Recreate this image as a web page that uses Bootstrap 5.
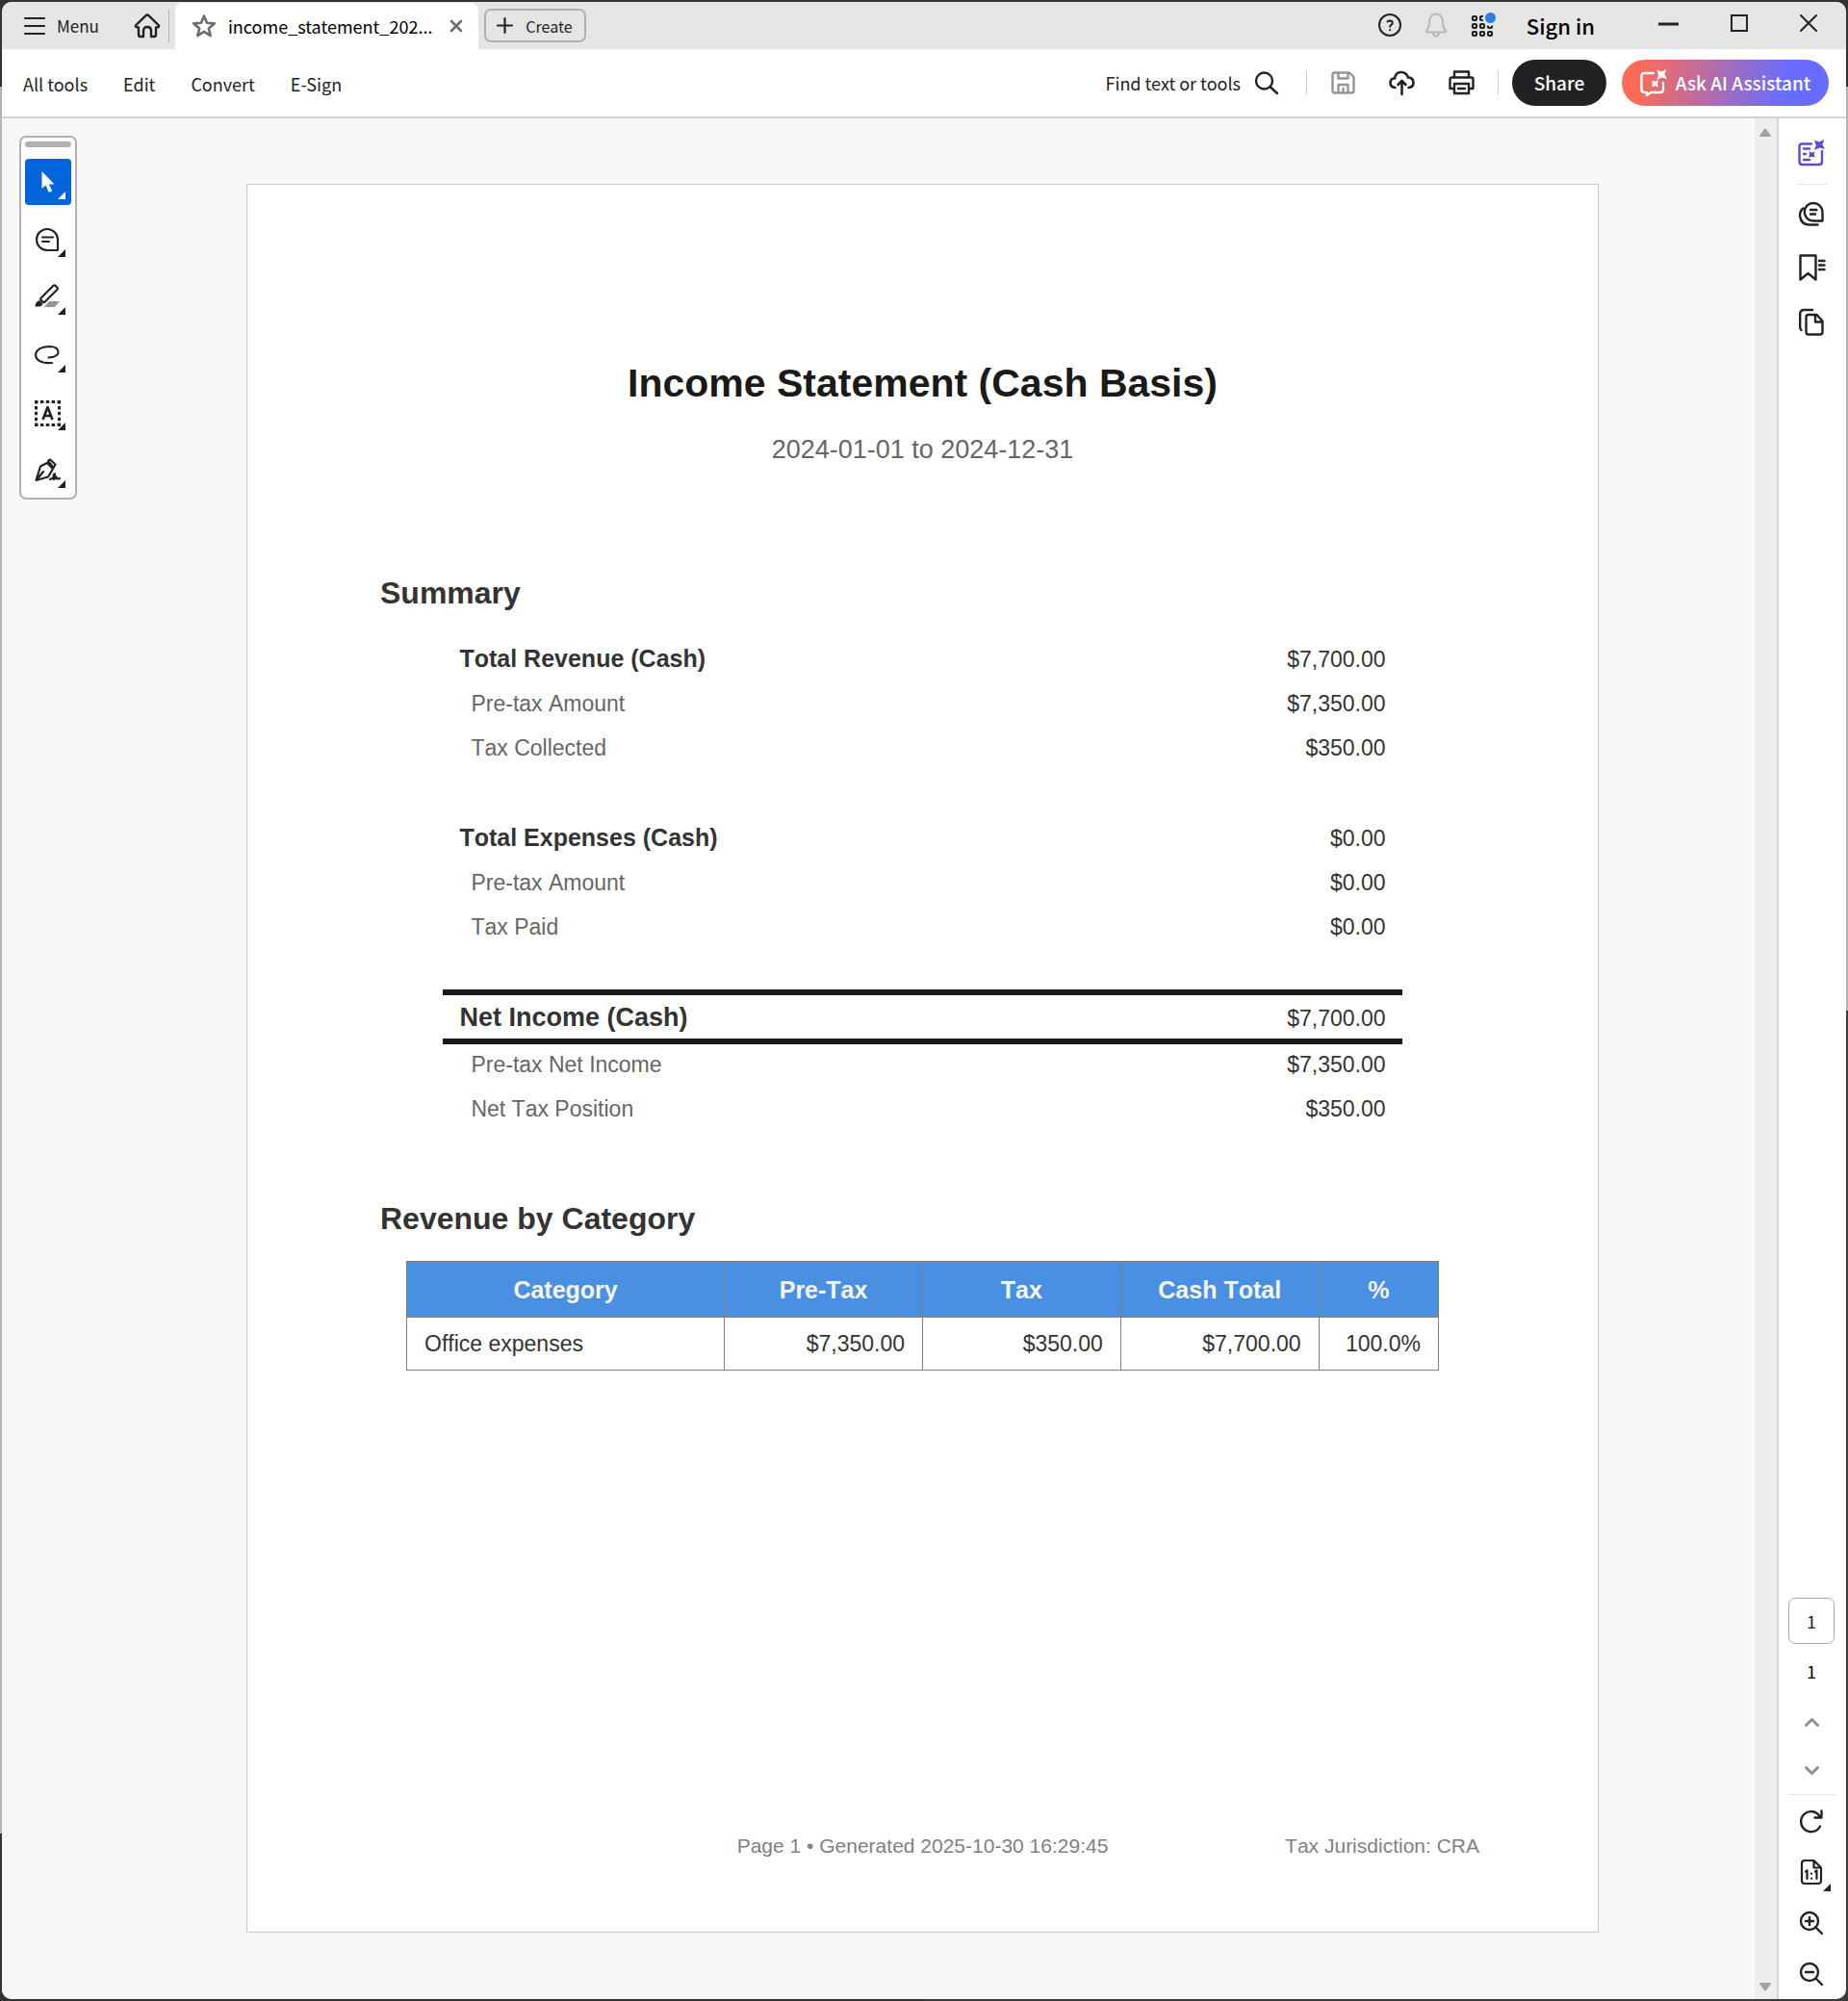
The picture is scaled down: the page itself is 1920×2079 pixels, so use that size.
<!DOCTYPE html>
<html lang="en">
<head>
<meta charset="utf-8">
<meta name="viewport" content="width=device-width, initial-scale=1">
<title>income_statement_2024.pdf</title>
<link rel="stylesheet" href="https://cdn.jsdelivr.net/npm/bootstrap@5.3.0/dist/css/bootstrap.min.css">
<style>
:root { --ink: #222; --line: #d3d3d3; --ui: "Noto Sans CJK SC", "Noto Sans", sans-serif; }
body { font-family: var(--ui); color: var(--ink); padding: 2px; min-height: 100vh;
  background:
    linear-gradient(#333 0 90px, #b4b4b4 90px 1905px, #333 1905px) left / 50% 100% no-repeat,
    linear-gradient(#333 0 90px, #b4b4b4 90px 1050px, #3a3a3a 1050px) right / 50% 100% no-repeat; }
.frame-edge { min-height: calc(100vh - 4px); background: #fff; border-radius: 10px; overflow: hidden; }
svg { display: block; flex: none; fill: none; stroke: currentColor; stroke-linecap: round; stroke-linejoin: round; overflow: visible; }
svg:not([stroke-width]) { stroke-width: 2; }
svg .solid { fill: currentColor; stroke: none; }
button { font-family: var(--ui); }
.plain { background: none; border: 0; padding: 0; color: inherit; display: flex; align-items: center; justify-content: center; }

/* title bar */
.titlebar { background: #e5e5e5; height: 49px; padding-right: 30px; line-height: 24px; font-size: 17px; }
.menu-btn { padding-left: 23px; gap: 12px; }
.home-btn { margin-left: 36px; width: 28px; }
.bar-rule { width: 1px; height: 34px; background: #b5b5b5; margin: 0 6px 0 8px; }
.doc-tab { background: #fff; border-radius: 8px 8px 0 0; margin-top: 1px; width: 315px; padding: 0 17px; color: #000; font-size: 18px; }
.doc-tab .star, .doc-tab .shut { color: #6e6e6e; }
.create-btn { border: 2px solid #b1b1b1; border-radius: 7px; width: 106px; height: 35px; margin-left: 6px; gap: 14px; font-size: 16px; }
.bell { color: #b8b8b8; }
.title-tools { padding-bottom: 2px; }
.signin { color: #000; font-size: 22px; font-weight: 500; }
.win-btns { gap: 54px; margin-left: 66px; padding-bottom: 3px; }

/* tool bar */
.toolbar { height: 72px; border-bottom: 2px solid var(--line); padding: 0 18px 0 22px; font-size: 18px; line-height: 28px; }
.toolbar a { color: var(--ink); text-decoration: none; }
.toolbar .tool-links { gap: 37px; padding-top: 2px; }
.find-btn { gap: 15px; margin-right: 29px; }
.file-btns { gap: 35px; margin-left: 25px; }
.vr-thin { width: 1px; height: 24px; background: #cfcfcf; }
.pill { border: 0; border-radius: 24px; height: 48px; color: #fff; font-weight: 500; font-size: 19px; }
.pill-share { background: #222; width: 98px; margin: 0 16px 0 14px; }
.pill-ai { width: 215px; gap: 9px; background: linear-gradient(100deg, #ff6b55 8%, #686dff 78%); }

/* quick tools */
.quick-col { width: 94px; padding: 18px 0 0 18px; }
.quick { width: 60px; border: 2px solid #b1b1b1; border-radius: 7px; background: #fff; padding: 4px 4px 0; }
.grip { height: 6px; border-radius: 3px; background: #b1b1b1; margin-bottom: 12px; }
.quick-btn { width: 48px; height: 48px; margin-bottom: 12px; padding-right: 2px; border-radius: 4px; position: relative; }
.quick-btn:last-child { margin-bottom: 4px; }
.quick-btn.picked { background: #0265dc; color: #fff; padding-right: 0; }
.fly::after { content: ""; position: absolute; right: 6px; bottom: 6px; border: 4px solid; border-color: transparent currentColor currentColor transparent; }

/* document area */
.desk { background: #f7f7f7; }
.sheet { width: 1405px; max-width: 100%; min-height: 1817px; margin: 68px auto 69px; padding: 181px 0 74px; background: #fff; border: 1px solid #c9c9c9; font-family: "Liberation Sans", Arial, sans-serif; font-kerning: none; color: #333; }
.sheet h1 { font-size: 41px; line-height: 50px; font-weight: 700; color: #1a1a1a; margin: 0 0 28px; }
.period { font-size: 27px; line-height: 32px; color: #666; margin: 0 0 113px; }
.sheet h2 { font-size: 32px; line-height: 40px; font-weight: 700; color: #333; margin: 0 138px 24px; }
.sums { width: 71%; margin: 0 auto 72px; font-size: 23px; line-height: 30px; border-collapse: collapse; }
.sums th, .sums td { height: 46px; padding: 9px 17px 0; vertical-align: baseline; }
.sums td { text-align: right; }
.sums .gap-row td { height: 47px; }
.sums th { font-weight: 400; color: #666; padding-left: 29px; }
.sums .total > * { height: 47px; }
.sums .total th { font-weight: 700; font-size: 25px; color: #333; padding-left: 17px; }
.sums .net > * { height: 51px; padding-top: 8px; border-top: 6px solid #1a1a1a; border-bottom: 6px solid #1a1a1a; }
.sums .net th { font-size: 27px; }
.sums .net + tr > * { padding-top: 6px; }
.cats { width: 1073px; max-width: 90%; margin: 0 auto; table-layout: fixed; border-collapse: collapse; font-size: 23px; line-height: 30px; }
.cats th, .cats td { border: 1px solid #808080; padding: 0 18px; height: 55px; text-align: right; }
.cats thead th { background: #4a90e2; color: #f5f5f5; font-size: 25px; height: 58px; text-align: center; }
.cats tbody th { font-weight: 400; text-align: left; }
.sheet-foot { display: grid; grid-template-columns: 1fr auto 1fr; padding: 0 123px; font-size: 21px; line-height: 30px; color: #808080; }

/* right side */
.track { width: 27px; background: #eee; border-left: 1px solid #fff; border-right: 2px solid var(--line); padding: 10px 0 8px; color: #a3a3a3; }
.rail { width: 70px; padding: 22px 2px 0 0; font-size: 18px; line-height: 24px; }
.rail .thin { height: 1px; background: #e1e1e1; }
.thin-short { width: 31px; margin: 18px 0 17px; }
.thin-long { width: 49px; }
.panel-btns { gap: 29px; }
.page-box { width: 48px; height: 48px; border: 1px solid #a6a6a6; border-radius: 7px; text-align: center; font-size: 18px; color: var(--ink); padding: 0; background: #fff; }
.step-btn { width: 48px; height: 50px; }
.rail-btn { width: 48px; height: 53px; position: relative; }
.rail-btn.fly::after { right: 4px; }
</style>
<script src="https://cdn.jsdelivr.net/npm/bootstrap@5.3.0/dist/js/bootstrap.bundle.min.js"></script>
</head>
<body>
<div class="frame-edge d-flex flex-column">
  <header class="titlebar d-flex align-items-center">
    <button class="plain menu-btn"><svg width="22" height="20" viewBox="0 0 22 20" stroke-width="2.200"><path d="M1 2h20M1 10h20M1 18h20"/></svg>Menu</button>
    <button class="plain home-btn" aria-label="Home"><svg width="28" height="26" viewBox="0 0 28 26" stroke-width="2.400"><path d="M12.600 2.200 2.400 12q-1.500 2 1 2.400h1.600V22q0 2 2 2h3v-6q0-4 4-4t4 4v6h3q2 0 2-2v-7.600h1.600q2.500-.4 1-2.400L15.400 2.200q-1.400-1.200-2.800 0z"/></svg></button>
    <span class="bar-rule"></span>
    <div class="doc-tab d-flex align-items-center align-self-stretch">
      <button class="plain star" aria-label="Star file"><svg width="26" height="26" viewBox="0 0 26 26" stroke-width="2.600"><path d="m13 2.500 3 7.300 7.800.6-6 5 1.900 7.700-6.700-4.200-6.700 4.200 1.900-7.700-6-5 7.800-.6z"/></svg></button>
      <span class="ms-2 ps-1 me-auto text-nowrap">income_statement_202...</span>
      <button class="plain shut" aria-label="Close tab"><svg width="12" height="12" viewBox="0 0 12 12" stroke-width="2.600"><path d="m1 1 10 10M11 1 1 11"/></svg></button>
    </div>
    <button class="plain create-btn"><svg width="15" height="15" viewBox="0 0 15 15" stroke-width="2.200"><path d="M7.500 0v15M0 7.500h15"/></svg>Create</button>
    <div class="title-tools d-flex align-items-center ms-auto">
      <button class="plain" aria-label="Help"><svg width="24" height="24" viewBox="0 0 24 24"><circle cx="12" cy="12" r="11"/><path d="M9.500 8.600Q10.500 7.500 12 7.500q2.700.1 2.700 2.200 0 1.300-1.300 2.100-1.300.9-1.300 2M12.100 17v.2"/></svg></button>
      <button class="plain bell ms-4" aria-label="Notifications"><svg width="24" height="26" viewBox="0 0 24 26"><path d="M12 1.500q-6.500.5-7 8Q5 16 2 19q-.6 1.500 1 1.500h18q1.600 0 1-1.500-3-3-3-9.500-.5-7.500-7-8zM9 21.500q.5 3 3 3t3-3"/></svg></button>
      <button class="plain ms-4" aria-label="Apps"><svg width="26" height="26" viewBox="0 0 26 26"><g stroke-width="2.200"><rect x="2" y="4" width="4" height="4" rx="1"/><rect x="10" y="4" width="4" height="4" rx="1"/><rect x="2" y="12" width="4" height="4" rx="1"/><rect x="10" y="12" width="4" height="4" rx="1"/><rect x="18" y="12" width="4" height="4" rx="1"/><rect x="2" y="20" width="4" height="4" rx="1"/><rect x="10" y="20" width="4" height="4" rx="1"/><rect x="18" y="20" width="4" height="4" rx="1"/></g><circle cx="20" cy="6.500" r="7.500" fill="#e5e5e5" stroke="none"/><circle cx="20.500" cy="5.500" r="5.500" fill="#2680eb" stroke="none"/></svg></button>
      <button class="plain signin ms-4 ps-2">Sign in</button>
      <div class="win-btns d-flex align-items-center">
        <button class="plain" aria-label="Minimize"><svg width="21" height="18" viewBox="0 0 21 18"><path d="M0 10h21" stroke-width="3" stroke-linecap="butt"/></svg></button>
        <button class="plain" aria-label="Maximize"><svg width="18" height="18" viewBox="0 0 18 18"><path d="M1 1h16v16H1z" stroke-linejoin="miter"/></svg></button>
        <button class="plain" aria-label="Close"><svg width="18" height="18" viewBox="0 0 18 18"><path d="m1 1 16 16M17 1 1 17"/></svg></button>
      </div>
    </div>
  </header>

  <nav class="toolbar d-flex align-items-center">
    <div class="tool-links d-flex">
      <a href="#">All tools</a><a href="#">Edit</a><a href="#">Convert</a><a href="#">E-Sign</a>
    </div>
    <button class="plain find-btn ms-auto">Find text or tools<svg width="24" height="24" viewBox="0 0 24 24" stroke-width="2.400"><circle cx="9.500" cy="10" r="8.500"/><path d="m16 16.500 7 6.500"/></svg></button>
    <span class="vr-thin"></span>
    <div class="file-btns d-flex align-items-center">
      <button class="plain" aria-label="Save"><svg width="25" height="24" viewBox="0 0 25 24" color="#959595" stroke-width="2.400"><path d="M3 1.500h16l4.500 4.500v14.500q0 2-2 2h-18q-2 0-2-2v-17q0-2 2-2zM7.500 2v5.500h10V2M7.500 22v-8h10v8M12.500 18v4"/></svg></button>
      <button class="plain" aria-label="Upload"><svg width="27" height="26" viewBox="0 0 27 26" stroke-width="2.600"><path d="M6.500 18Q1.500 17.500 1.500 13T6 8.500Q7 2 12.500 2t7.500 5.500q5.500.2 5.500 5.500 0 4.500-5 5M13.500 25V11.500M9.500 15l4-4 4 4"/></svg></button>
      <button class="plain" aria-label="Print"><svg width="27" height="26" viewBox="0 0 27 26" stroke-width="2.400"><path d="M6 7.500V1.500h15v6M6 19H1.500V9.500q0-2 2-2h20q2 0 2 2V19H21M6 14h15v10H6zM10 19h7"/></svg></button>
    </div>
    <span class="vr-thin ms-4"></span>
    <button class="pill pill-share">Share</button>
    <button class="pill pill-ai plain"><svg width="28" height="28" viewBox="0 0 28 28" stroke-width="2.400"><path d="M14 4H4.500Q1.500 4 1.500 7v14q0 3 3 3H7v3l4.500-3H21q3 0 3-3v-7"/><path class="solid" d="M17.500.5l4.500 2L27.500 0l-2.200 5 2.700 5-5.500-1.500-5 2.500 1.500-5zM12.500 11.500l3 1 3.500-1-1 3 1 3.500-3.500-.7-3.500 1 .8-3.300z"/></svg>Ask AI Assistant</button>
  </nav>

  <div class="d-flex flex-grow-1">
    <div class="desk flex-grow-1 d-flex">
      <aside class="quick-col flex-shrink-0">
        <div class="quick">
          <div class="grip"></div>
          <button class="plain quick-btn picked fly" aria-label="Select"><svg width="14" height="22" viewBox="0 0 14 22"><path class="solid" d="M.5 0v18l4-3.500 3 7q2.500.5 3.500-1.500l-3-6.500h5.500z"/></svg></button>
          <button class="plain quick-btn fly" aria-label="Comment"><svg width="24" height="24" viewBox="0 0 24 24" stroke-width="2.200"><path d="M12 1a11 11 0 1 0 0 22h11V12A11 11 0 0 0 12 1zM7 9.500h11M7 14h7"/></svg></button>
          <button class="plain quick-btn fly" aria-label="Highlight"><svg width="26" height="28" viewBox="0 0 26 28" stroke-width="2.200"><path d="m19.500 1.800-13 13q-.8 1 0 1.800l2.200 2.200q.8.8 1.800 0l13-13q1-1 0-2l-2-2q-1-1-2 0z"/><path class="solid" d="m5 17 3.500 3.500q-1 3-4 3H.5Q.5 18.500 5 17z"/><path d="M15 18h11l-5 6H10z" fill="#959595" stroke="none"/></svg></button>
          <button class="plain quick-btn fly" aria-label="Draw"><svg width="26" height="20" viewBox="0 0 26 20" stroke-width="2.200"><path d="M14.500 12.500q9-.5 10-5Q25 1.500 16 1 1.500 1.500 1 10q1 9 17 8"/></svg></button>
          <button class="plain quick-btn fly" aria-label="Add text"><svg width="27" height="27" viewBox="0 0 27 27"><path d="M0 1.500h27M0 25.500h27M1.500 0v27M25.500 0v27" stroke-width="3" stroke-linecap="butt" stroke-dasharray="3.500 2.375"/><path d="m8.500 20 5-13 5 13M10.500 16h6" stroke-width="2.600" stroke-linecap="butt"/></svg></button>
          <button class="plain quick-btn fly" aria-label="Sign"><svg width="27" height="24" viewBox="0 0 27 24" stroke-width="2.200"><path d="m13 4-7 3.500L1.500 22 14 18.500 19 10zM2 21.500 9 13M14 2l2-1.500 5.500 5-2 3.500zM16 21q6-2 5-5.500-1.500-.5-1.500 4 0 3.500 3-1 0 3 3.500 1.500"/></svg></button>
        </div>
      </aside>
      <main class="flex-grow-1">
        <article class="sheet d-flex flex-column">
          <h1 class="text-center">Income Statement (Cash Basis)</h1>
          <p class="period text-center">2024-01-01 to 2024-12-31</p>
          <h2>Summary</h2>
          <table class="sums">
            <tbody>
              <tr class="total"><th scope="row">Total Revenue (Cash)</th><td>$7,700.00</td></tr>
              <tr><th scope="row">Pre-tax Amount</th><td>$7,350.00</td></tr>
              <tr><th scope="row">Tax Collected</th><td>$350.00</td></tr>
              <tr class="gap-row"><td colspan="2"></td></tr>
              <tr class="total"><th scope="row">Total Expenses (Cash)</th><td>$0.00</td></tr>
              <tr><th scope="row">Pre-tax Amount</th><td>$0.00</td></tr>
              <tr><th scope="row">Tax Paid</th><td>$0.00</td></tr>
              <tr><td colspan="2"></td></tr>
              <tr class="total net"><th scope="row">Net Income (Cash)</th><td>$7,700.00</td></tr>
              <tr><th scope="row">Pre-tax Net Income</th><td>$7,350.00</td></tr>
              <tr><th scope="row">Net Tax Position</th><td>$350.00</td></tr>
            </tbody>
          </table>
          <h2>Revenue by Category</h2>
          <table class="cats">
            <colgroup><col style="width:30.8%"><col style="width:19.2%"><col style="width:19.2%"><col style="width:19.2%"><col style="width:11.6%"></colgroup>
            <thead><tr><th scope="col">Category</th><th scope="col">Pre-Tax</th><th scope="col">Tax</th><th scope="col">Cash Total</th><th scope="col">%</th></tr></thead>
            <tbody><tr><th scope="row">Office expenses</th><td>$7,350.00</td><td>$350.00</td><td>$7,700.00</td><td>100.0%</td></tr></tbody>
          </table>
          <footer class="sheet-foot mt-auto"><span></span><span>Page 1 • Generated 2025-10-30 16:29:45</span><span class="text-end">Tax Jurisdiction: CRA</span></footer>
        </article>
      </main>
    </div>
    <div class="track d-flex flex-column justify-content-between align-items-center">
      <svg width="12" height="10" viewBox="0 0 12 10"><path class="solid" d="M5 1q1-1 2 0l5 7q0 1-1 1H1Q0 9 0 8z"/></svg>
      <svg width="12" height="10" viewBox="0 0 12 10"><path class="solid" d="M5 9q1 1 2 0l5-7q0-1-1-1H1Q0 1 0 2z"/></svg>
    </div>
    <aside class="rail d-flex flex-column align-items-center">
      <button class="plain" aria-label="AI summary"><svg width="28" height="28" viewBox="0 0 28 28" color="#5c4bd1" stroke-width="2.400"><path d="M14 4.500H4.500q-3 0-3 3V23q0 3 3 3H22q3 0 3-3V12M6 9.500h6M6 15h2M6 21h6"/><path class="solid" d="M17 .5l4.800 2L27.500 0l-2.200 5 2.700 5-5.500-1.500-5.500 2.500 1.800-5zM11.500 12.500l3 1 3-1-.8 2.800.8 3.200-3-.7-3.200 1 .7-3.300z"/></svg></button>
      <span class="thin thin-short"></span>
      <div class="panel-btns d-flex flex-column align-items-center">
        <button class="plain" aria-label="Comments"><svg width="26" height="26" viewBox="0 0 26 26" stroke-width="2.400"><path d="M15 2a9 9 0 0 0 0 18.500h9.500V11A9.300 9.300 0 0 0 15 2zM12 9h6.500M12 13.500h5M4.500 7.500Q1 10 1 15q1 9 9 9.500h9.500"/></svg></button>
        <button class="plain" aria-label="Bookmarks"><svg width="27" height="28" viewBox="0 0 27 28" stroke-width="2.400"><path d="M1.500 1.500h16v25l-8-6.500-8 6.500zM21 7h5.500M21 11.500h5.500M21 16h5.500"/></svg></button>
        <button class="plain" aria-label="Pages"><svg width="26" height="28" viewBox="0 0 26 28" stroke-width="2.400"><path d="M17 6h-7q-2.500 0-2.500 2.500V24q0 2.500 2.500 2.500h12q2.500 0 2.500-2.500V12.500L18.500 6H17M17 6v7.500h7M2.500 22Q1.200 21 1.200 19V5q0-4 4-4H14"/></svg></button>
      </div>

      <input class="page-box mt-auto" type="text" value="1" aria-label="Page number">
      <span class="mt-3 pb-3 d-block text-black">1</span>
      <button class="plain step-btn" aria-label="Previous page"><svg width="15" height="9" viewBox="0 0 15 9" color="#909090" stroke-width="3"><path d="m1.500 7.500 6-6 6 6"/></svg></button>
      <button class="plain step-btn" aria-label="Next page"><svg width="15" height="9" viewBox="0 0 15 9" color="#909090" stroke-width="3"><path d="m1.500 1.500 6 6 6-6"/></svg></button>
      <span class="thin thin-long"></span>
      <button class="plain rail-btn" aria-label="Rotate"><svg width="24" height="24" viewBox="0 0 24 24" stroke-width="2.400"><path d="M21 17.500A10.500 10.500 0 1 1 20.500 7M22.500 1.500v7h-7"/></svg></button>
      <button class="plain rail-btn fly" aria-label="Actual size"><svg width="22" height="26" viewBox="0 0 22 26" stroke-width="2.200"><path d="M13.500 1H4Q1 1 1 4v18q0 3 3 3h14q3 0 3-3V8.500zM13.500 1v7.500H21M5 12.500l1.500-1V20M15 12.500l1.500-1V20M11 14.500v.3M11 19.500v.3"/></svg></button>
      <button class="plain rail-btn" aria-label="Zoom in"><svg width="24" height="24" viewBox="0 0 24 24" stroke-width="2.400"><circle cx="10" cy="10" r="9"/><path d="m16.500 16.500 6.500 6.500M6 10h8M10 6v8"/></svg></button>
      <button class="plain rail-btn" aria-label="Zoom out"><svg width="24" height="24" viewBox="0 0 24 24" stroke-width="2.400"><circle cx="10" cy="10" r="9"/><path d="m16.500 16.500 6.500 6.500M6 10h8"/></svg></button>
    </aside>
  </div>
</div>
</body>
</html>
